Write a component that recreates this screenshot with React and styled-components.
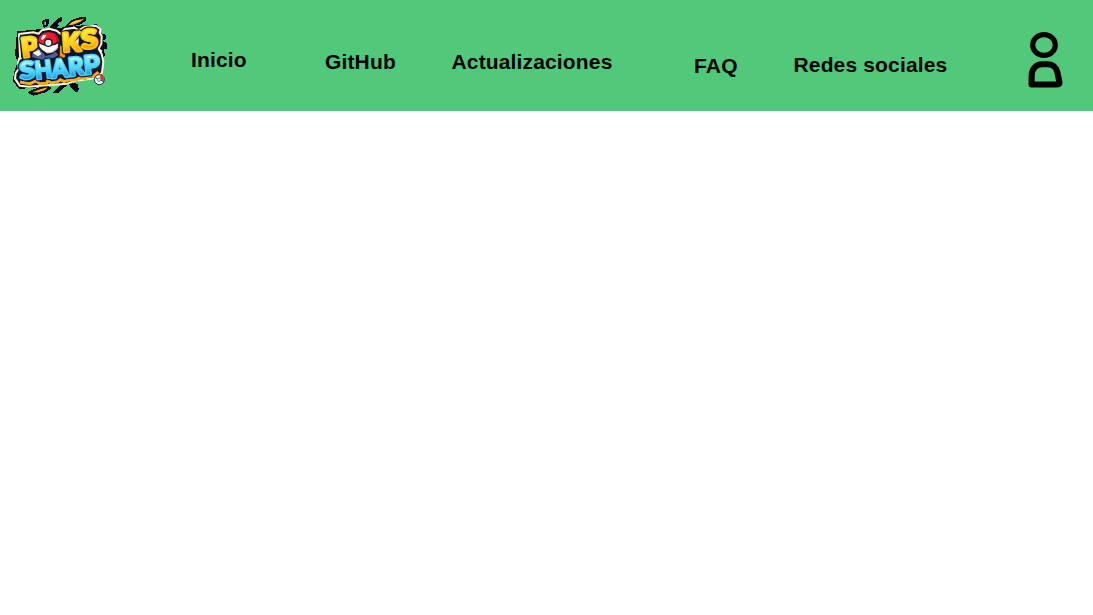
import React from "react";
import styled, { createGlobalStyle } from "styled-components";

const GlobalStyle = createGlobalStyle`
  * { box-sizing: border-box; }
  body { margin: 0; background: #ffffff; font-family: "Liberation Sans", Arial, sans-serif; }
`;

const Header = styled.header`
  display: flex;
  align-items: flex-start;
  height: 111px;
  background: #52c97a;
`;

const Brand = styled.a`
  flex: none;
  margin: 10px 0 0 8px;
  width: 105px;
  height: 90px;
`;

const LogoArt = styled.svg`
  display: block;
  width: 105px;
  height: 90px;
`;

const LogoText = styled.text`
  font-family: Lato, "Open Sans", sans-serif;
  font-weight: 900;
  text-anchor: middle;
  paint-order: stroke;
  stroke-linejoin: round;
`;

const Nav = styled.nav`
  display: grid;
  grid-template-columns: 134px 126.5px 242.5px 99.5px 170px;
  align-items: start;
  margin-left: 78px;
`;

const NavLink = styled.a`
  padding-top: ${(p) => p.$drop}px;
  color: #000000;
  font-size: 21px;
  font-weight: 700;
  line-height: 24px;
  letter-spacing: 0.15px;
  white-space: nowrap;
  text-decoration: none;
`;

const Profile = styled.a`
  flex: none;
  margin: 31px 29px 0 auto;
  width: 36px;
  height: 58px;
`;

const ProfileIcon = styled.svg`
  display: block;
  width: 36px;
  height: 58px;
`;

const links = [
  { label: "Inicio", drop: 48 },
  { label: "GitHub", drop: 50 },
  { label: "Actualizaciones", drop: 50 },
  { label: "FAQ", drop: 54 },
  { label: "Redes sociales", drop: 53 },
];

const top = [
  { c: "P", x: 68, y: 139, r: -8, s: 80, w: 1 },
  { c: "K", x: 191, y: 124, r: -4, s: 78, w: 1.02 },
  { c: "S", x: 246, y: 115, r: -5, s: 78, w: 1.15 },
];

const bottom = [
  { c: "S", x: 60, y: 206, r: -6, s: 72, w: 1.15 },
  { c: "H", x: 109, y: 205, r: -7, s: 73, w: 0.9 },
  { c: "A", x: 158, y: 202, r: -6, s: 76, w: 0.92 },
  { c: "R", x: 207, y: 196, r: -6, s: 76, w: 0.95 },
  { c: "P", x: 254, y: 191, r: -6, s: 77, w: 1 },
];

function Letters({ items, ...paint }) {
  return items.map((l, i) => (
    <LogoText
      key={i}
      fontSize={l.s}
      transform={`translate(${l.x} ${l.y}) rotate(${l.r}) scale(${l.w} 1)`}
      {...paint}
    >
      {l.c}
    </LogoText>
  ));
}

function Logo() {
  return (
    <LogoArt viewBox="0 0 315 270" role="img" aria-label="Poks Sharp">
      <defs>
        <linearGradient id="gold" x1="0" y1="0" x2="0" y2="1">
          <stop offset="0.3" stopColor="#ffe736" />
          <stop offset="0.6" stopColor="#ffcb18" />
          <stop offset="0.85" stopColor="#f9980f" />
        </linearGradient>
        <linearGradient id="aqua" x1="0" y1="0" x2="0" y2="1">
          <stop offset="0.3" stopColor="#8df0fd" />
          <stop offset="0.6" stopColor="#4ad2fa" />
          <stop offset="0.85" stopColor="#1c92e6" />
        </linearGradient>
      </defs>
      <g fill="#080a1b" shapeRendering="crispEdges">
        <path d="M101 34L114 26L123 28L121 47L108 54Z" />
        <path d="M127 50L151 23L163 22L162 31L148 43L153 46L144 57L127 60Z" />
        <path d="M171 49L189 31L214 22L235 20L235 31L217 43L190 51L177 57Z" />
        <path d="M195 50L230 45L267 43L278 53L276 69L294 74L295 84L286 92L298 101L298 115L287 119L291 137L281 145L286 167L282 197L200 217L99 231L34 237L14 213L20 181L29 157L21 134L27 64L91 58Z" />
        <path d="M58 247L81 236L117 226L130 234L116 246L76 257Z" />
        <path d="M134 247L158 225L184 214L211 223L212 241L194 237L182 223L165 235L151 251Z" />
        <path d="M184 227L205 235L212 244L202 246Z" />
      </g>
      <path d="M109 37L114 34V44L110 46Z" fill="#71cef0" />
      <path d="M180 46L194 35L231 25L216 36L195 44Z" fill="#ffae18" />
      <path d="M183 43L204 31L220 29L200 38Z" fill="#ffd034" />
      <path d="M72 247L99 237L119 232L111 240L91 247Z" fill="#ffac18" />
      <path
        d="M33 72L76 67L92 71L101 61L124 56L146 62L158 72L171 57L199 53L212 61L231 50L264 47L278 58L275 68L281 78L280 102L272 116L281 132L286 155L282 188L263 204L200 213L178 221L115 226L63 230L35 227L21 206L23 189L32 177L30 156L36 140Z"
        fill="#11152f" stroke="#fff6dc" strokeWidth="6" strokeLinejoin="bevel"
      />
      <path d="M30 150L41 144M272 118L282 124" stroke="#fff6dc" strokeWidth="5" />
      <path d="M72 141L76 121L94 114L105 124L111 139L132 133L142 124L151 134L139 143L102 149Z" fill="#526087" />
      <path d="M74 129L93 119L100 132L90 139Z" fill="#fff4da" />
      <path d="M156 106L170 112L171 142L155 146Z" fill="#f59018" />
      <path
        d="M36 216L66 221L84 213L96 221L116 220L119 212L130 219L149 215L157 209L169 215L181 210L203 209L219 203L232 206L240 199L259 197L271 186"
        fill="none" stroke="#ffab18" strokeWidth="9"
      />
      <Letters items={top} fill="#11152f" stroke="#11152f" strokeWidth="16" aria-hidden="true" />
      <Letters items={top} fill="url(#gold)" stroke="#ffc41a" strokeWidth="9" />
      <path d="M202 94L213 84L211 105Z" fill="#fff4d4" />
      <g>
        <circle cx="122" cy="98" r="32" fill="#fffaf0" stroke="#11152f" strokeWidth="5" />
        <path d="M91 97C91 77 104 67 122 67C141 67 153 78 153 98C142 104 131 107 122 107C110 106 98 103 91 97Z" fill="#f01b2a" />
        <path d="M138 72C149 78 153 86 152 98L142 102L146 88Z" fill="#a9142b" />
        <path d="M91 96C101 104 112 106 121 106C135 106 145 102 153 97" fill="none" stroke="#11152f" strokeWidth="4" />
        <path d="M99 85L105 75L116 74L110 84L102 91Z" fill="#ffffff" />
        <path d="M114 127C128 131 143 123 150 110" fill="none" stroke="#cdd2d6" strokeWidth="4" />
        <circle cx="121" cy="98" r="11" fill="#ffffff" stroke="#11152f" strokeWidth="4" />
        <circle cx="121" cy="98" r="5" fill="#d2edf1" />
      </g>
      <Letters items={bottom} fill="#11152f" stroke="#11152f" strokeWidth="15" aria-hidden="true" />
      <Letters items={bottom} fill="url(#aqua)" stroke="#4dd0f9" strokeWidth="8" />
      <g fill="none" stroke="#c9f9ff" strokeWidth="5">
        <path d="M42 165L55 156M94 162L96 173M155 150L161 153M190 147L200 145M239 142L250 140" />
      </g>
      <g>
        <circle cx="274" cy="209" r="15" fill="#fff8e9" stroke="#29213d" strokeWidth="3" />
        <path d="M275 195C286 195 289 203 288 214L278 210Z" fill="#e53a31" />
        <path d="M262 203L279 211L288 215" fill="none" stroke="#29395d" strokeWidth="3" />
        <circle cx="273" cy="209" r="5" fill="#ffffff" stroke="#2e87b5" strokeWidth="3" />
      </g>
    </LogoArt>
  );
}

export default function App() {
  return (
    <>
      <GlobalStyle />
      <Header>
        <Brand>
          <Logo />
        </Brand>
        <Nav>
          {links.map((link) => (
            <NavLink key={link.label} $drop={link.drop}>
              {link.label}
            </NavLink>
          ))}
        </Nav>
        <Profile aria-label="Perfil">
          <ProfileIcon viewBox="0 0 36 58" fill="none" stroke="#000000" strokeWidth="5.2">
            <ellipse cx="16" cy="14" rx="11.3" ry="10.4" />
            <path
              d="M3.6 53.5V46C3.6 38 7.5 33.3 14.5 33.3H19.5C25 33.3 28 36.5 29.3 41L31.4 51.2Q31.8 53.5 29.6 53.5Z"
              strokeWidth="6.1"
              strokeLinejoin="round"
            />
          </ProfileIcon>
        </Profile>
      </Header>
    </>
  );
}
